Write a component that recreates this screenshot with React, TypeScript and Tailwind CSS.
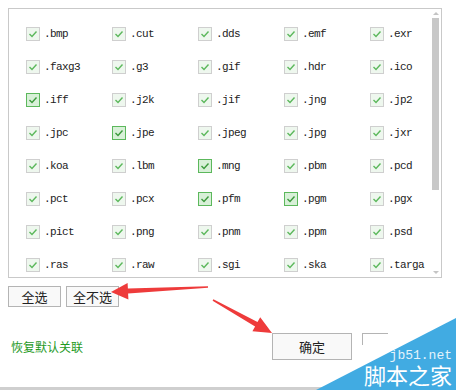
const rows = [
  ['bmp', 'cut', 'dds', 'emf', 'exr'],
  ['faxg3', 'g3', 'gif', 'hdr', 'ico'],
  ['iff', 'j2k', 'jif', 'jng', 'jp2'],
  ['jpc', 'jpe', 'jpeg', 'jpg', 'jxr'],
  ['koa', 'lbm', 'mng', 'pbm', 'pcd'],
  ['pct', 'pcx', 'pfm', 'pgm', 'pgx'],
  ['pict', 'png', 'pnm', 'ppm', 'psd'],
  ['ras', 'raw', 'sgi', 'ska', 'targa'],
];

// 鼠标划过的几个格子边框更深
const hot = ['iff', 'jpe', 'mng', 'pfm', 'pgm'];

const cjk = { fontFamily: '"Noto Sans CJK SC", "Liberation Sans", sans-serif' };

function CheckBox({ active }: { active: boolean }) {
  return (
    <div
      className={
        active
          ? 'flex h-[14px] w-[14px] items-center justify-center border border-[#5cb85c] bg-[#d8f0d8]'
          : 'flex h-[14px] w-[14px] items-center justify-center border border-[#cfcfcf] bg-[#eef7ee]'
      }
    >
      <svg width="10" height="10" viewBox="0 0 10 10">
        <polyline
          points="1.5,5 4,7.5 8.5,2.5"
          fill="none"
          stroke={active ? '#3c9a3c' : '#5cb85c'}
          strokeWidth="1.4"
        />
      </svg>
    </div>
  );
}

function Button({ label, className }: { label: string; className: string }) {
  return (
    <div
      className={`flex items-center justify-center border border-[#b4b4b4] bg-[#f9f9f9] text-[13px] text-[#222] ${className}`}
      style={cjk}
    >
      {label}
    </div>
  );
}

export default function App() {
  return (
    <div className="relative h-[390px] w-[456px] overflow-hidden bg-white">
      {/* 扩展名列表 */}
      <div className="ml-[8px] mt-[8px] flex h-[270px] w-[434px] border border-[#c9c9c9] bg-white">
        <div className="flex-1 overflow-hidden pl-[17px] pt-[18px]">
          <div className="grid grid-cols-[repeat(5,86px)] auto-rows-[33px]">
            {rows.flat().map((ext) => (
              <div key={ext} className="flex h-[14px] items-center gap-[4px]">
                <CheckBox active={hot.includes(ext)} />
                <span
                  className="text-[11px] tracking-[-0.6px] text-[#222]"
                  style={{ fontFamily: '"Liberation Mono", monospace' }}
                >
                  .{ext}
                </span>
              </div>
            ))}
          </div>
        </div>
        <div className="mr-[1px] flex w-[9px] flex-col items-center pb-[3px] pt-[3px]">
          <div className="h-0 w-0 border-x-[3px] border-b-[3px] border-x-transparent border-b-[#c4c4c4]" />
          <div className="mt-[3px] h-[172px] w-[7px] bg-[#c8c8c8]" />
          <div className="flex-1" />
          <div className="h-0 w-0 border-x-[3px] border-t-[3px] border-x-transparent border-t-[#c4c4c4]" />
        </div>
      </div>

      <div className="ml-[8px] mt-[8px] flex gap-[5px]">
        <Button label="全选" className="h-[21px] w-[53px]" />
        <Button label="全不选" className="h-[21px] w-[53px]" />
      </div>

      <div className="mt-[26px] flex items-center justify-between pl-[11px] pr-[68px]">
        <span className="text-[12px] text-[#1f9a1f]" style={cjk}>
          恢复默认关联
        </span>
        <div className="flex items-start gap-[10px]">
          <Button label="确定" className="h-[27px] w-[80px]" />
          {/* 第二个按钮被水印遮住，只露出左上角 */}
          <div className="h-[12px] w-[26px] border-l border-t border-[#b4b4b4]" />
        </div>
      </div>

      <div className="mt-[27px] h-[5px] bg-[#cfcfcf]" />

      {/* 红色箭头 */}
      <svg className="absolute left-0 top-0" width="456" height="390">
        <polygon
          points="111,292 127.6,283 127.9,288.6 208,286.2 208,287.8 128.1,293.6 128.4,299.5"
          fill="#ee3b3b"
        />
        <polygon
          points="272,333 252.4,331.2 255.1,326.4 212.6,300.7 213.4,299.3 257.5,322 260.2,317.2"
          fill="#ee3b3b"
        />
      </svg>

      {/* 水印 */}
      <div className="absolute bottom-0 right-0 h-[72px] w-[140px] bg-[#41abe2] [clip-path:polygon(100%_0,100%_100%,0_100%)]" />
      <div className="absolute right-[4px] top-[349px] text-right leading-none">
        <div
          className="text-[13px] text-[#e4f3fb]"
          style={{ fontFamily: '"Liberation Mono", monospace' }}
        >
          jb51.net
        </div>
        <div className="mt-[1px] text-[22px] text-white" style={cjk}>
          脚本之家
        </div>
      </div>
    </div>
  );
}
